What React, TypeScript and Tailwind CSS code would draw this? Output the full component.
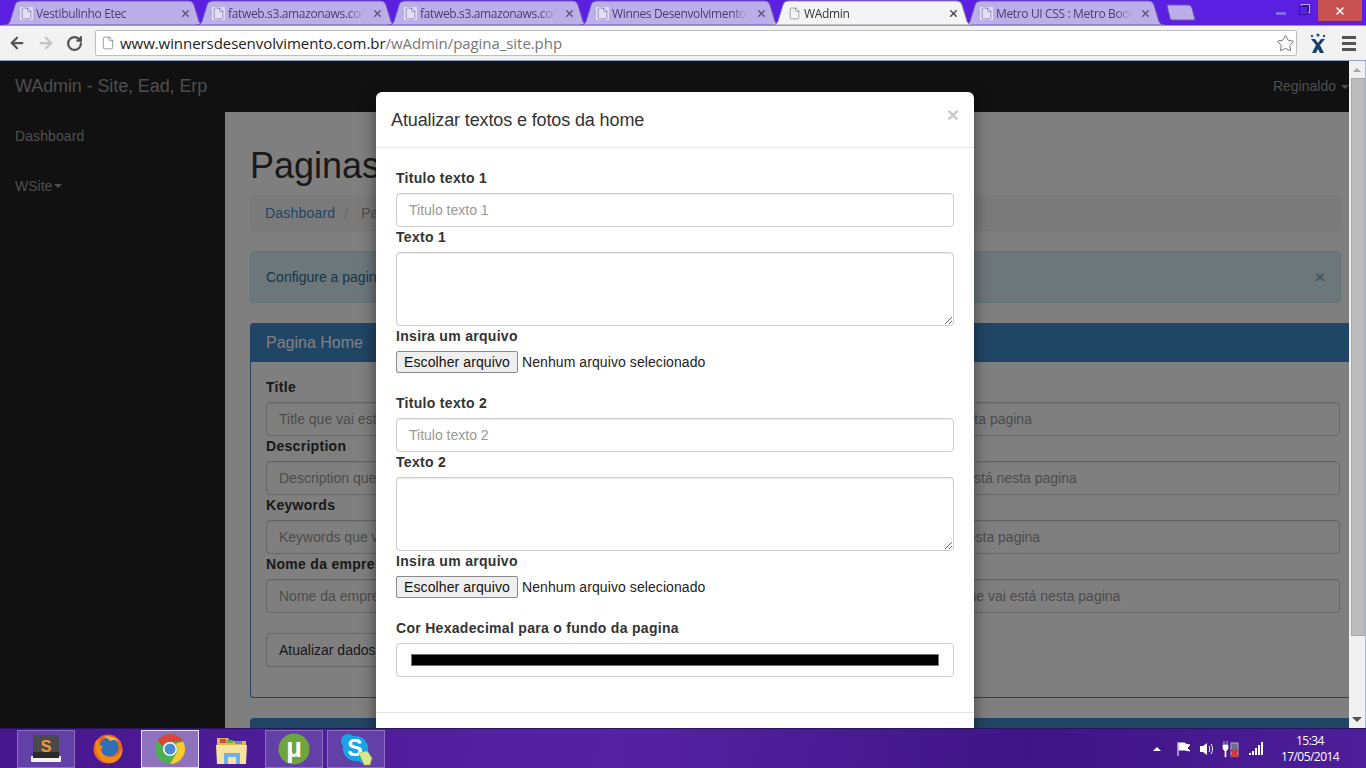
import { ArrowLeft, ArrowRight, File, RotateCw, Star, X } from "lucide-react";

const tabs = [
  { title: "Vestibulinho Etec" },
  { title: "fatweb.s3.amazonaws.com/etec" },
  { title: "fatweb.s3.amazonaws.com/etec" },
  { title: "Winnes Desenvolvimento Web" },
  { title: "WAdmin", active: true },
  { title: "Metro UI CSS : Metro Bootstrap" },
];

const pageFields = [
  { label: "Title", placeholder: "Title que vai estar no topo do navegador quando o usuario entrar e que vai aparecer no google quando está nesta pagina" },
  { label: "Description", placeholder: "Description que vai aparecer no resultado da busca do google e no buscadores quando usuario procura o que está nesta pagina" },
  { label: "Keywords", placeholder: "Keywords que vão ser usadas pelos buscadores para encontrar o site, e mostrar para os usuarios o que está nesta pagina" },
  { label: "Nome da empresa", placeholder: "Nome da empresa que vai aparecer no topo do navegador e resultados do google e dos outros buscadores e que vai está nesta pagina" },
];

const inputClass =
  "block w-full h-[34px] px-[12px] rounded-[4px] border border-[#cccccc] bg-white text-[14px] text-[#555555] placeholder:text-[#999999] shadow-[inset_0_1px_1px_rgba(0,0,0,0.075)]";
const labelClass = "block h-[20px] mb-[5px] text-[14px] leading-[20px] font-bold tracking-[0.3px] text-[#333333]";

function BrowserTab({ title, active }: { title: string; active?: boolean }) {
  return (
    <div className={`relative w-[201px] h-[25px] -ml-[9px] first:ml-0 shrink-0 ${active ? "z-10" : ""}`}>
      <svg className="absolute inset-0 w-full h-full" viewBox="0 0 201 25" preserveAspectRatio="none">
        <path
          d="M0 25C5 25 6 22 7 18L11 5C12 2 14 1 17 1L184 1C187 1 189 2 190 5L194 18C195 22 196 25 201 25Z"
          fill={active ? "#f4f4f4" : "#bcaee8"}
          stroke={active ? "#8f8f9f" : "#6e58b0"}
          strokeWidth="1"
        />
      </svg>
      <div className="relative flex items-center h-full pl-[16px] pr-[14px] pt-[2px]">
        <File size={13} strokeWidth={1.2} className={`shrink-0 mr-[3px] ${active ? "text-[#777777]" : "text-[#77679f] bg-[#e4ddf6]"}`} />
        <span
          className={`flex-1 whitespace-nowrap overflow-hidden text-[12px] tracking-[-0.35px] font-['Open_Sans',sans-serif] [mask-image:linear-gradient(to_right,black_88%,transparent)] ${
            active ? "text-[#333333]" : "text-[#4a3d70]"
          }`}
        >
          {title}
        </span>
        <X size={11} strokeWidth={3} className={`shrink-0 ml-[8px] ${active ? "text-[#444444]" : "text-[#5a5078]"}`} />
      </div>
    </div>
  );
}

function TabStrip() {
  return (
    <div className="flex items-start h-[25px] pl-[4px] bg-[#5a1fe0] shrink-0 overflow-hidden">
      {tabs.map((tab, i) => (
        <BrowserTab key={i} title={tab.title} active={tab.active} />
      ))}
      <svg width="30" height="17" viewBox="0 0 30 17" className="ml-[1px] mt-[4px] shrink-0">
        <path d="M1 1L22 1C24 1 25 2 26 4L29 16L6 16C5 16 4 15 4 14Z" fill="#bcaee8" stroke="#6e58b0" />
      </svg>
      <div className="flex-1" />
      <div className="flex items-start shrink-0 mr-[4px]">
        <span className="w-[10px] h-[3px] mt-[12px] mr-[13px] bg-[#8a6ae0]" />
        <span className="w-[9px] h-[9px] mt-[6px] mr-[10px] border border-[#2f1590] shadow-[2px_-2px_0_-1px_#2f1590,2px_-2px_0_0_#b8a8ea]" />
        <span className="flex items-center justify-center w-[44px] h-[21px] bg-[#c75050]">
          <X size={12} strokeWidth={3} className="text-white" />
        </span>
      </div>
    </div>
  );
}

function Toolbar() {
  return (
    <div className="flex items-center h-[35px] pl-[8px] bg-[#f2f2f2] border-t border-[#9d9d9d] shrink-0">
      <ArrowLeft size={18} strokeWidth={3} className="text-[#555555]" />
      <ArrowRight size={18} strokeWidth={3} className="ml-[11px] text-[#c4c4c4]" />
      <RotateCw size={17} strokeWidth={3.2} className="ml-[11px] text-[#555555]" />
      <div className="flex items-center w-[1202px] h-[26px] ml-[12px] pl-[5px] rounded-[2px] border border-[#bfbfbf] bg-white">
        <File size={14} strokeWidth={1.2} className="shrink-0 text-[#777777]" />
        <div className="ml-[5px] whitespace-nowrap text-[15px] tracking-[-0.06px] font-['Open_Sans',sans-serif]">
          <span className="text-[#222222]">www.winnersdesenvolvimento.com.br</span>
          <span className="text-[#777777]">/wAdmin/pagina_site.php</span>
        </div>
        <div className="flex-1" />
        <Star size={19} strokeWidth={1} className="mr-[1px] text-[#555555]" />
      </div>
      <svg width="18" height="22" viewBox="0 0 18 22" className="ml-[12px]">
        <circle cx="9" cy="3" r="1.6" fill="#1f4f80" />
        <circle cx="3" cy="4" r="1.2" fill="#1f4f80" />
        <circle cx="15" cy="4" r="1.2" fill="#1f4f80" />
        <path d="M2 7L6 7L9 11L12 7L16 7L11 13L15 21L11 21L9 17L7 21L3 21L7 13Z" fill="#17406a" />
      </svg>
      <div className="flex flex-col gap-[3px] ml-[15px]">
        <span className="block w-[14px] h-[3px] bg-[#555555]" />
        <span className="block w-[14px] h-[3px] bg-[#555555]" />
        <span className="block w-[14px] h-[3px] bg-[#555555]" />
      </div>
    </div>
  );
}

function BackgroundPage() {
  return (
    <div className="flex flex-col h-full font-['Liberation_Sans',Arial,sans-serif]">
      <div className="flex items-center justify-between h-[51px] pl-[15px] bg-[#222222] shrink-0 overflow-hidden">
        <span className="text-[18px] tracking-[-0.1px] text-[#9d9d9d]">WAdmin - Site, Ead, Erp</span>
        <span className="flex items-center text-[14px] text-[#9d9d9d]">
          Reginaldo
          <span className="ml-[5px] border-x-[4px] border-t-[4px] border-x-transparent border-t-[#9d9d9d]" />
        </span>
      </div>
      <div className="flex flex-1 min-h-0">
        <div className="w-[225px] shrink-0 bg-[#222222] px-[15px] pt-[14px] text-[14px] text-[#9d9d9d]">
          <div className="h-[20px] leading-[20px] tracking-[0.1px]">Dashboard</div>
          <div className="flex items-center h-[20px] mt-[30px]">
            WSite
            <span className="ml-[2px] border-x-[4px] border-t-[4px] border-x-transparent border-t-[#9d9d9d]" />
          </div>
        </div>
        <div className="flex-1 min-w-0 bg-white pl-[25px] pr-[8px] pt-[33px] overflow-hidden">
          <h1 className="h-[40px] mb-[10px] pt-[1px] text-[36px] leading-[40px] text-[#333333]">Paginas do site</h1>
          <div className="flex items-center h-[36px] mb-[20px] px-[15px] rounded-[4px] bg-[#f5f5f5] text-[14px]">
            <span className="tracking-[0.2px] text-[#428bca]">Dashboard</span>
            <span className="pl-[9px] pr-[13px] text-[#cccccc]">/</span>
            <span className="text-[#999999]">Paginas do site</span>
          </div>
          <div className="flex items-center justify-between h-[52px] mb-[20px] pl-[15px] pr-[14px] rounded-[4px] border border-[#bce8f1] bg-[#d9edf7] text-[14px] text-[#31708f]">
            <span>Configure a pagina home do site</span>
            <X size={12} strokeWidth={4} className="text-[#31708f] opacity-50" />
          </div>
          <div className="mb-[20px] -mr-[8px] rounded-l-[4px] border border-r-0 border-[#428bca]">
            <div className="flex items-center h-[38px] px-[15px] bg-[#428bca] text-[16px] text-white">Pagina Home</div>
            <div className="pl-[15px] pr-[9px] pt-[15px] pb-[30px]">
              {pageFields.map((field) => (
                <div key={field.label}>
                  <label className={`${labelClass} tracking-[0.2px]`}>{field.label}</label>
                  <input className={inputClass} placeholder={field.placeholder} />
                </div>
              ))}
              <button className="block h-[34px] mt-[20px] px-[12px] rounded-[4px] border border-[#cccccc] bg-white text-[14px] text-[#333333]">
                Atualizar dados da pagina home
              </button>
            </div>
          </div>
          <div className="h-[60px] -mr-[8px] rounded-l-[4px] bg-[#428bca]" />
        </div>
      </div>
    </div>
  );
}

function FileField() {
  return (
    <div className="flex items-center h-[22px]">
      <button className="h-[22px] w-[122px] rounded-[2px] border border-[#8a8a8a] bg-[#efefef] text-[14px] tracking-[0.1px] text-[#111111]">
        Escolher arquivo
      </button>
      <span className="ml-[4px] text-[14px] tracking-[0.08px] text-[#222222]">Nenhum arquivo selecionado</span>
    </div>
  );
}

function TextBlock({ n }: { n: number }) {
  return (
    <div className="mb-[20px]">
      <label className={labelClass}>{`Titulo texto ${n}`}</label>
      <input className={inputClass} placeholder={`Titulo texto ${n}`} />
      <label className={labelClass}>{`Texto ${n}`}</label>
      <textarea className="block w-full h-[74px] px-[12px] py-[6px] rounded-[4px] border border-[#cccccc] bg-white shadow-[inset_0_1px_1px_rgba(0,0,0,0.075)]" />
      <label className={labelClass}>Insira um arquivo</label>
      <FileField />
    </div>
  );
}

function Modal() {
  return (
    <div className="absolute left-[376px] top-[31px] w-[598px] rounded-[6px] bg-white shadow-[0_5px_15px_rgba(0,0,0,0.5)] font-['Liberation_Sans',Arial,sans-serif]">
      <div className="flex items-center justify-between h-[56px] pl-[15px] pr-[15px] pt-[2px] border-b border-[#e5e5e5]">
        <h4 className="text-[18px] tracking-[-0.125px] text-[#333333]">Atualizar textos e fotos da home</h4>
        <span className="-mt-[13px] text-[21px] leading-none font-bold text-[#c9c9c9]">×</span>
      </div>
      <div className="px-[20px] pt-[20px] pb-[35px]">
        <TextBlock n={1} />
        <TextBlock n={2} />
        <label className={labelClass}>Cor Hexadecimal para o fundo da pagina</label>
        <input
          type="color"
          defaultValue="#000000"
          className="block w-full h-[34px] px-[12px] py-[6px] rounded-[4px] border border-[#cccccc] bg-white"
        />
      </div>
      <div className="h-[70px] border-t border-[#e5e5e5]" />
    </div>
  );
}

function Scrollbar() {
  return (
    <div className="flex flex-col w-[17px] shrink-0 bg-[#f0f0f0] border-r border-[#a7b8d8]">
      <div className="flex items-center justify-center h-[17px]">
        <span className="border-x-[4px] border-b-[4px] border-x-transparent border-b-[#a3a3a3]" />
      </div>
      <div className="h-[558px] ml-[2px] bg-[#bcbcbc] border border-[#a9a9a9]" />
      <div className="flex-1" />
      <div className="flex items-center justify-center h-[17px]">
        <span className="border-x-[5px] border-t-[5px] border-x-transparent border-t-[#505050]" />
      </div>
    </div>
  );
}

function SublimeIcon() {
  return (
    <svg width="32" height="32" viewBox="0 0 32 32">
      <rect x="1" y="23" width="30" height="6" rx="1" fill="#f4f4f4" />
      <path d="M3 5C3 3 4 2 6 2L26 2C28 2 29 3 29 5L29 25L3 25Z" fill="#4a4a4a" />
      <rect x="3" y="19" width="26" height="6" fill="#2b2b2b" />
      <text x="16" y="19" textAnchor="middle" fontSize="16" fontWeight="700" fill="#f29a38" fontFamily="Liberation Sans">S</text>
    </svg>
  );
}

function FirefoxIcon() {
  return (
    <svg width="32" height="32" viewBox="0 0 32 32">
      <circle cx="16" cy="16" r="14.5" fill="#e8651f" />
      <circle cx="17" cy="14" r="9.5" fill="#2f6fb5" />
      <path d="M4 8C2 18 8 30 18 30C26 30 31 23 30.5 15C28 23 21 26 14 23C9 21 8 16 11 13C8 13 6 11 7 7C6 7 5 7 4 8Z" fill="#f08a1d" />
      <path d="M11 4C16 2 24 4 27 9C23 6 20 7 18 8C17 6 14 4 11 4Z" fill="#f6b73c" />
    </svg>
  );
}

function ChromeIcon() {
  return (
    <svg width="32" height="32" viewBox="0 0 32 32">
      <circle cx="16" cy="16" r="15" fill="#4caf50" />
      <path d="M16 1A15 15 0 0 1 29 8.5L16 8.5C12 8.5 9.5 10.5 8.6 13L3.6 7.5A15 15 0 0 1 16 1Z" fill="#db4437" />
      <path d="M29 8.5A15 15 0 0 1 16 31L22.5 20C24 17 23.5 13 21.5 10.8Z" fill="#fbcb2e" />
      <circle cx="16" cy="16" r="7" fill="#ffffff" />
      <circle cx="16" cy="16" r="5.5" fill="#4a8ad4" />
    </svg>
  );
}

function ExplorerIcon() {
  return (
    <svg width="34" height="34" viewBox="0 0 34 34">
      <path d="M2 6L13 6L15 9L31 9L31 13L2 13Z" fill="#e0b64f" />
      <rect x="5" y="7" width="6" height="4" fill="#cf4b3f" />
      <rect x="12" y="8" width="6" height="3" fill="#5cab55" />
      <rect x="20" y="9" width="7" height="3" fill="#4c96d7" />
      <path d="M1 13L32 13L31 32L2 32Z" fill="#f7e3a1" />
      <path d="M9 21L25 21L25 32L21 32L21 25L13 25L13 32L9 32Z" fill="#6db3e8" />
    </svg>
  );
}

function TorrentIcon() {
  return (
    <svg width="32" height="32" viewBox="0 0 32 32">
      <circle cx="16" cy="16" r="15.5" fill="#6ea53f" />
      <text x="16" y="24" textAnchor="middle" fontSize="27" fontWeight="700" fill="#ffffff" fontFamily="Liberation Sans">µ</text>
    </svg>
  );
}

function SkypeIcon() {
  return (
    <svg width="34" height="34" viewBox="0 0 34 34">
      <circle cx="9" cy="9" r="7" fill="#18a5e6" />
      <circle cx="24" cy="24" r="7" fill="#18a5e6" />
      <circle cx="16.5" cy="16.5" r="12.5" fill="#18a5e6" />
      <text x="16" y="24" textAnchor="middle" fontSize="23" fontWeight="700" fill="#ffffff" fontFamily="Liberation Sans">S</text>
      <path d="M20 21L28 19L33 26L31 33L25 33Z" fill="#dbe88a" stroke="#9cb33f" strokeWidth="0.5" />
    </svg>
  );
}

function TaskButton({ children, variant }: { children: React.ReactNode; variant?: "open" | "active" }) {
  const look =
    variant === "active"
      ? "bg-[#8f72bd] border-[#e6def4]"
      : variant === "open"
        ? "bg-[#6340a8] border-[#8c6fc0]"
        : "border-transparent";
  return <div className={`flex items-center justify-center w-[58px] h-[38px] border ${look}`}>{children}</div>;
}

function Tray() {
  return (
    <div className="flex items-center ml-auto text-white">
      <span className="border-x-[4px] border-b-[4px] border-x-transparent border-b-white" />
      <svg width="16" height="16" viewBox="0 0 16 16" className="ml-[15px]">
        <path d="M2 1L2 15M3 2L9 2L9 3L14 4L11 7L14 10L9 9L3 9Z" stroke="white" fill="white" strokeWidth="1" />
      </svg>
      <svg width="16" height="16" viewBox="0 0 16 16" className="ml-[7px]">
        <path d="M1 5L4 5L8 2L8 14L4 11L1 11Z" fill="white" />
        <path d="M10 5C11 7 11 9 10 11M12 3C14 6 14 10 12 13" stroke="white" fill="none" />
      </svg>
      <svg width="18" height="18" viewBox="0 0 18 18" className="ml-[7px]">
        <path d="M2 1L2 5M5 1L5 5M1 5L6 5L6 9L4 11L4 17L3 17L3 11L1 9Z" stroke="white" fill="white" strokeWidth="0.7" />
        <rect x="9" y="3" width="7" height="13" fill="#6f6a8a" stroke="#b0acc4" />
        <path d="M9 10L16 17M16 10L9 17" stroke="#e03030" strokeWidth="2.4" />
      </svg>
      <svg width="15" height="13" viewBox="0 0 15 13" className="ml-[8px]">
        <path d="M1 11h2v2h-2zM4 9h2v4h-2zM7 6h2v7h-2zM10 3h2v10h-2zM13 0h2v13h-2z" fill="white" />
      </svg>
      <div className="w-[103px] pr-[9px] text-center text-[12px] leading-[16px] font-['Open_Sans',sans-serif] tracking-[-0.55px]">
        <div>15:34</div>
        <div>17/05/2014</div>
      </div>
    </div>
  );
}

function Taskbar() {
  return (
    <div className="flex items-center h-[40px] pl-[17px] shrink-0 border-t border-[#2a1560] bg-[linear-gradient(100deg,#47178f_0%,#5522a4_45%,#3f1585_75%,#4d1e9a_100%)]">
      <div className="flex items-center gap-[4px]">
        <TaskButton variant="open"><SublimeIcon /></TaskButton>
        <TaskButton><FirefoxIcon /></TaskButton>
        <TaskButton variant="active"><ChromeIcon /></TaskButton>
        <TaskButton><ExplorerIcon /></TaskButton>
        <TaskButton variant="open"><TorrentIcon /></TaskButton>
        <TaskButton variant="open"><SkypeIcon /></TaskButton>
      </div>
      <Tray />
    </div>
  );
}

export default function App() {
  return (
    <div className="flex flex-col w-[1366px] h-[768px] overflow-hidden">
      <TabStrip />
      <Toolbar />
      <div className="h-[1px] bg-[#8fa3c4] shrink-0" />
      <div className="flex flex-1 min-h-0">
        <div className="relative flex-1 min-w-0 overflow-hidden">
          <BackgroundPage />
          <div className="absolute inset-0 bg-black/50" />
          <Modal />
        </div>
        <Scrollbar />
      </div>
      <Taskbar />
    </div>
  );
}
